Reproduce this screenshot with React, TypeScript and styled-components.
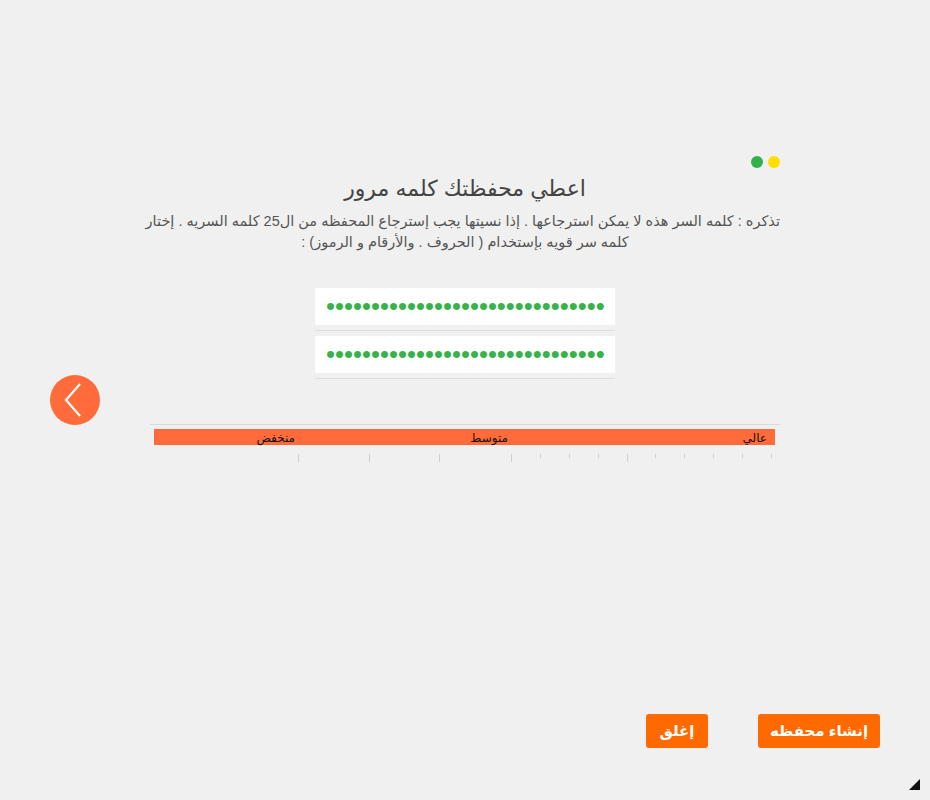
import React from "react";
import styled, { createGlobalStyle } from "styled-components";

const Global = createGlobalStyle`
  html, body { margin: 0; padding: 0; background: #f0f0f0; }
  body { font-family: "Liberation Sans", "DejaVu Sans", Arial, sans-serif; }
`;

const Page = styled.div`
  position: relative;
  width: 930px;
  height: 800px;
  background: #f0f0f0;
  display: flex;
  flex-direction: column;
  overflow: hidden;
`;

const Body = styled.div`
  display: flex;
  padding-left: 50px;
`;

const NavColumn = styled.div`
  width: 100px;
  padding-top: 375px;
`;

const BackButton = styled.button`
  width: 50px;
  height: 50px;
  border-radius: 50%;
  border: none;
  padding: 0;
  background: #ff6b3b;
  display: flex;
  align-items: center;
  justify-content: center;
  cursor: pointer;
`;

const Content = styled.div`
  width: 630px;
  padding-top: 156px;
  display: flex;
  flex-direction: column;
`;

const StatusDots = styled.div`
  display: flex;
  justify-content: flex-end;
  gap: 5px;
  height: 12px;
`;

const Dot = styled.span<{ $color: string }>`
  width: 12px;
  height: 12px;
  border-radius: 50%;
  background: ${(p) => p.$color};
`;

const Title = styled.h2`
  margin: 6px 0 0;
  font-size: 22px;
  font-weight: normal;
  line-height: 30px;
  color: #444;
  text-align: center;
`;

const Description = styled.p`
  margin: 7px 0 0;
  font-size: 14.5px;
  line-height: 21px;
  color: #555;
  text-align: center;
  white-space: nowrap;
`;

const Fields = styled.div`
  margin-top: 35px;
  align-self: center;
  width: 300px;
  display: flex;
  flex-direction: column;
  gap: 5px;
`;

const Field = styled.div`
  padding-bottom: 5px;
  border-bottom: 1px solid #dcdcdc;
`;

const PasswordInput = styled.input`
  display: block;
  box-sizing: border-box;
  width: 300px;
  height: 37px;
  border: none;
  outline: none;
  background: #fff;
  padding: 0 0 0 11px;
  font-family: "Liberation Sans", Arial, sans-serif;
  font-size: 25.7px;
  color: #37b34a;
  direction: ltr;
`;

const Slider = styled.div`
  margin-top: 45px;
  border-top: 1px solid #dadada;
  padding-top: 4px;
  position: relative;
  height: 45px;
`;

const Bar = styled.div`
  height: 16px;
  margin: 0 5px 0 4px;
  background: #ff6b3b;
`;

const Label = styled.span`
  position: absolute;
  top: 5px;
  font-size: 12px;
  line-height: 16px;
  color: #111;
  transform: translateX(-100%);
  white-space: nowrap;
`;

const Tick = styled.span<{ $tall: boolean }>`
  position: absolute;
  top: 29px;
  width: 1px;
  height: ${(p) => (p.$tall ? 8 : 4)}px;
  background: #cfcfcf;
`;

const Footer = styled.div`
  margin-top: auto;
  display: flex;
  justify-content: flex-end;
  gap: 50px;
  padding: 0 50px 52px 0;
`;

const ActionButton = styled.button<{ $width: number }>`
  width: ${(p) => p.$width}px;
  height: 34px;
  border: none;
  border-radius: 3px;
  background: #ff6a00;
  color: #fff;
  font-family: "Liberation Sans", "DejaVu Sans", Arial, sans-serif;
  font-size: 15px;
  font-weight: bold;
  cursor: pointer;
  padding: 0;
`;

const ResizeGrip = styled.div`
  position: absolute;
  right: 10px;
  bottom: 10px;
  width: 0;
  height: 0;
  border-left: 11px solid transparent;
  border-bottom: 11px solid #111;
`;

const ticks: { x: number; tall: boolean }[] = [
  { x: 148, tall: true },
  { x: 219, tall: true },
  { x: 289, tall: true },
  { x: 361, tall: true },
  { x: 390, tall: false },
  { x: 419, tall: false },
  { x: 448, tall: false },
  { x: 477, tall: true },
  { x: 505, tall: false },
  { x: 534, tall: false },
  { x: 563, tall: false },
  { x: 592, tall: false },
  { x: 621, tall: false },
];

const labels = [
  { x: 145, text: "منخفض" },
  { x: 358, text: "متوسط" },
  { x: 617, text: "عالي" },
];

const password = "a".repeat(31);

export default function App() {
  return (
    <>
      <Global />
      <Page>
        <Body>
          <NavColumn>
            <BackButton aria-label="رجوع">
              <svg width="24" height="34" viewBox="0 0 24 34">
                <polyline
                  points="17,1 3,17 17,33"
                  fill="none"
                  stroke="#fff"
                  strokeWidth="2.2"
                />
              </svg>
            </BackButton>
          </NavColumn>
          <Content dir="rtl">
            <StatusDots dir="ltr">
              <Dot $color="#31b14b" />
              <Dot $color="#ffdf00" />
            </StatusDots>
            <Title>اعطي محفظتك كلمه مرور</Title>
            <Description>
              تذكره : كلمه السر هذه لا يمكن استرجاعها . إذا نسيتها يجب إسترجاع المحفظه من ال25 كلمه السريه . إختار
              <br />
              كلمه سر قويه بإستخدام ( الحروف . والأرقام و الرموز) :
            </Description>
            <Fields>
              <Field>
                <PasswordInput type="password" readOnly value={password} />
              </Field>
              <Field>
                <PasswordInput type="password" readOnly value={password} />
              </Field>
            </Fields>
            <Slider dir="ltr">
              <Bar />
              {labels.map((l) => (
                <Label key={l.text} style={{ left: l.x }}>
                  {l.text}
                </Label>
              ))}
              {ticks.map((t) => (
                <Tick key={t.x} $tall={t.tall} style={{ left: t.x }} />
              ))}
            </Slider>
          </Content>
        </Body>
        <Footer>
          <ActionButton $width={62}>إغلق</ActionButton>
          <ActionButton $width={122}>إنشاء محفظه</ActionButton>
        </Footer>
        <ResizeGrip />
      </Page>
    </>
  );
}
